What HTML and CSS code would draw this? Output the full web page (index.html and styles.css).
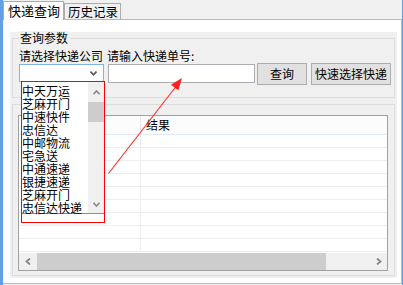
FILE: index.html
```html
<!DOCTYPE html>
<html>
<head>
<meta charset="utf-8">
<link rel="stylesheet" href="styles.css">
</head>
<body>
<div class="window">
  <div class="tabs">
    <div class="tab active">快递查询</div>
    <div class="tab other">历史记录</div>
  </div>
  <div class="page">
    <div class="group g1">
      <div class="gframe">
        <div class="glabel">查询参数</div>
        <div class="labels">
          <span class="lab1">请选择快递公司</span>
          <span class="lab2">请输入快递单号:</span>
        </div>
        <div class="controls">
          <div class="combo">
            <svg width="7" height="5" viewBox="0 0 7 5"><path d="M0.5 0.5 L3.5 3.8 L6.5 0.5" fill="none" stroke="#555" stroke-width="1.6"/></svg>
          </div>
          <div class="textbox"></div>
          <div class="btn b1">查询</div>
          <div class="btn b2">快速选择快递</div>
        </div>
      </div>
    </div>
    <div class="group g2">
      <div class="gframe">
        <div class="grid">
          <div class="ghead"><div class="c1"></div><div class="c2">结果</div></div>
          <div class="row"><div class="c1"></div><div class="c2"></div></div>
          <div class="row"><div class="c1"></div><div class="c2"></div></div>
          <div class="row"><div class="c1"></div><div class="c2"></div></div>
          <div class="row"><div class="c1"></div><div class="c2"></div></div>
          <div class="row"><div class="c1"></div><div class="c2"></div></div>
          <div class="row"><div class="c1"></div><div class="c2"></div></div>
          <div class="row"><div class="c1"></div><div class="c2"></div></div>
          <div class="row"><div class="c1"></div><div class="c2"></div></div>
          <div class="row"><div class="c1"></div><div class="c2"></div></div>
          <div class="hgap"></div>
          <div class="hscroll">
            <div class="sbtn"><svg width="6" height="7" viewBox="0 0 6 7"><path d="M5 0.5 L1.5 3.5 L5 6.5" fill="none" stroke="#868686" stroke-width="1.8"/></svg></div>
            <div class="hthumb"></div>
            <div class="htrack"></div>
            <div class="sbtn"><svg width="6" height="7" viewBox="0 0 6 7"><path d="M1 0.5 L4.5 3.5 L1 6.5" fill="none" stroke="#868686" stroke-width="1.8"/></svg></div>
          </div>
        </div>
      </div>
    </div>
  </div>
</div>

<div class="droplist">
  <div class="items">
    <div>中天万运</div>
    <div>芝麻开门</div>
    <div>中速快件</div>
    <div>忠信达</div>
    <div>中邮物流</div>
    <div>宅急送</div>
    <div>中通速递</div>
    <div>银捷速递</div>
    <div>芝麻开门</div>
    <div>忠信达快递</div>
  </div>
  <div class="vscroll">
    <div class="vbtn up"><svg width="7" height="5" viewBox="0 0 7 5"><path d="M0.5 4.2 L3.5 0.9 L6.5 4.2" fill="none" stroke="#8a8a8a" stroke-width="1.6"/></svg></div>
    <div class="vthumb"></div>
    <div class="vtrack"></div>
    <div class="vbtn down"><svg width="7" height="5" viewBox="0 0 7 5"><path d="M0.5 0.8 L3.5 4.1 L6.5 0.8" fill="none" stroke="#8a8a8a" stroke-width="1.6"/></svg></div>
  </div>
</div>
<div class="redbox"></div>
<svg class="arrow" width="403" height="285" viewBox="0 0 403 285">
  <line x1="108.5" y1="173.5" x2="176" y2="86.5" stroke="#ff2a2a" stroke-width="1.1"/>
  <polygon points="182,78 171,84.7 178.3,90.3" fill="#ff1f1f"/>
</svg>
</body>
</html>
```

FILE: styles.css
```css
body {
  margin: 0;
  width: 403px;
  height: 285px;
  overflow: hidden;
  position: relative;
  background: #f0f0f0;
  font-family: "Noto Sans CJK SC", "Noto Sans", sans-serif;
  font-size: 12px;
  color: #000;
}

.window {
  box-sizing: border-box;
  width: 403px;
  height: 285px;
  border-left: 3px solid #62a0e6;
  border-right: 1px solid #62a0e6;
  background: #f0f0f0;
}

.tabs {
  display: flex;
  align-items: flex-end;
  height: 19px;
  position: relative;
  z-index: 1;
}

.tab {
  box-sizing: border-box;
  border: 1px solid #acacac;
  border-bottom: none;
  white-space: nowrap;
}

.tab.active {
  width: 61px;
  height: 19px;
  margin-bottom: -1px;
  background: #fff;
  padding-left: 4px;
  line-height: 17px;
  font-size: 13px;
}

.tab.other {
  width: 57px;
  height: 16px;
  background: #f0f0f0;
  padding-left: 3px;
  line-height: 15px;
  font-size: 12.5px;
}

.page {
  box-sizing: border-box;
  height: 265px;
  background: #fff;
  border-top: 1px solid #b9b9b9;
  border-right: 1px solid #b9b9b9;
  border-bottom: 1px solid #b9b9b9;
  padding: 12px 0 0 7px;
}

.group {
  box-sizing: border-box;
  width: 387px;
  background: #f0f0f0;
  padding: 0 2px;
}

.g1 { height: 68px; padding-top: 6px; }
.g2 { height: 178px; padding-top: 4px; }

.gframe {
  box-sizing: border-box;
  border: 1px solid #dcdcdc;
}

.g1 .gframe { height: 60px; }
.g2 .gframe { height: 172px; }

.glabel {
  width: max-content;
  height: 13px;
  line-height: 13px;
  margin: -8px 0 0 6px;
  padding: 0 1px;
  background: #f0f0f0;
}

.labels {
  display: flex;
  height: 13px;
  line-height: 13px;
  margin-top: 5px;
  padding-left: 6px;
  white-space: nowrap;
}

.lab1 { width: 88px; }

.controls {
  display: flex;
  align-items: flex-start;
  height: 22px;
  margin-top: 1px;
  padding-left: 6px;
}

.combo {
  box-sizing: border-box;
  width: 85px;
  height: 18px;
  margin-top: 1px;
  border: 1px solid #7eb4ea;
  background: #fff;
  display: flex;
  align-items: center;
  justify-content: flex-end;
  padding-right: 6px;
}

.textbox {
  box-sizing: border-box;
  width: 147px;
  height: 19px;
  margin: 1px 0 0 4px;
  border: 1px solid #abadb3;
  background: #fff;
}

.btn {
  box-sizing: border-box;
  height: 22px;
  border: 1px solid #adadad;
  background: #e1e1e1;
  text-align: center;
  line-height: 20px;
  white-space: nowrap;
}

.b1 { width: 50px; margin-left: 2px; }
.b2 { width: 80px; margin-left: 4px; }

.grid {
  box-sizing: border-box;
  width: 370px;
  height: 156px;
  margin: 10px 0 0 5px;
  border: 1px solid #a0a0a0;
  background: #fff;
}

.ghead {
  box-sizing: border-box;
  display: flex;
  height: 19px;
  background: #fcfcfc;
  border-bottom: 1px solid #e1e9f4;
  line-height: 18px;
}

.ghead .c1 {
  box-sizing: border-box;
  width: 122px;
  border-right: 1px solid #e8e8e8;
}

.ghead .c2 { padding-left: 5px; }

.row {
  box-sizing: border-box;
  display: flex;
  height: 13px;
  border-bottom: 1px solid #ededed;
}

.row .c1 {
  box-sizing: border-box;
  width: 122px;
  border-right: 1px solid #ededed;
}

.hgap { height: 1px; }

.hscroll {
  display: flex;
  height: 17px;
  background: #f0f0f0;
}

.sbtn {
  width: 17px;
  display: flex;
  align-items: center;
  justify-content: center;
}

.hthumb {
  width: 289px;
  margin-left: 1px;
  background: #cdcdcd;
}

.htrack { flex: 1; }

.droplist {
  position: absolute;
  left: 21px;
  top: 82px;
  box-sizing: border-box;
  width: 83px;
  height: 132px;
  background: #fff;
  border-bottom: 1px solid #8c8c8c;
  display: flex;
}

.items {
  width: 66px;
  padding: 2px 0 0 1px;
  line-height: 13px;
  white-space: nowrap;
}

.vscroll {
  width: 16px;
  background: #f0f0f0;
  display: flex;
  flex-direction: column;
}

.vbtn {
  display: flex;
  align-items: center;
  justify-content: center;
}

.vbtn.up { height: 20px; }
.vbtn.down { height: 17px; }

.vthumb {
  height: 20px;
  background: #cdcdcd;
}

.vtrack { flex: 1; }

.redbox {
  position: absolute;
  left: 21px;
  top: 81px;
  box-sizing: border-box;
  width: 84px;
  height: 142px;
  border: 1px solid #ff0000;
}

.arrow {
  position: absolute;
  left: 0;
  top: 0;
}
```
